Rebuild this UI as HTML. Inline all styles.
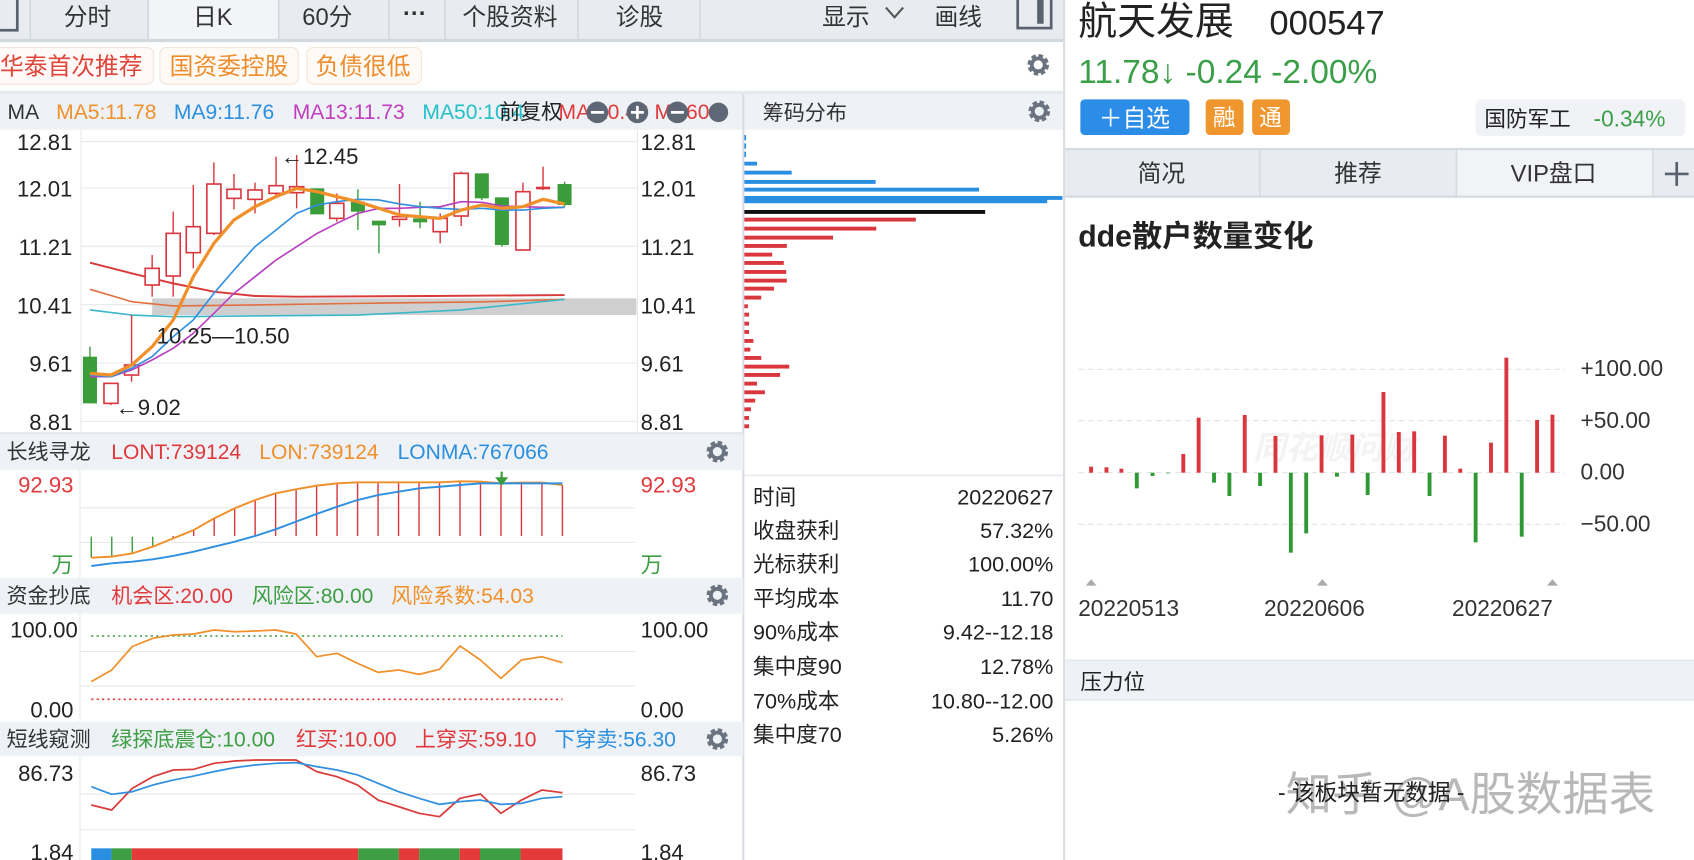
<!DOCTYPE html>
<html><head><meta charset="utf-8">
<style>
html,body{margin:0;padding:0;background:#fff;overflow:hidden}
svg{display:block}
text{font-family:"Liberation Sans","Noto Sans CJK SC",sans-serif}
</style></head>
<body>
<svg id="s" width="1694" height="860" viewBox="0 0 1568 796" preserveAspectRatio="none" xmlns="http://www.w3.org/2000/svg">
<defs>
<g id="gear"><circle r="7.5" fill="none" stroke="#6b7380" stroke-width="5" stroke-dasharray="3.6 2.3"/><circle r="6" fill="none" stroke="#6b7380" stroke-width="3.5"/></g>
</defs>
<rect width="1568" height="796" fill="#fff"/>
<rect x="0" y="0" width="985" height="37" fill="#e8ecf1"/>
<rect x="137" y="0" width="121" height="37" fill="#f2f4f7"/>
<rect x="0" y="36" width="985" height="3" fill="#d3d8df"/>
<g stroke="#d3d8df" stroke-width="1.5">
<line x1="28" y1="0" x2="28" y2="36"/><line x1="137" y1="0" x2="137" y2="36"/><line x1="258" y1="0" x2="258" y2="36"/><line x1="360" y1="0" x2="360" y2="36"/><line x1="412" y1="0" x2="412" y2="36"/><line x1="535" y1="0" x2="535" y2="36"/><line x1="648" y1="0" x2="648" y2="36"/></g>
<rect x="-6" y="-4" width="22" height="32" fill="none" stroke="#5a6270" stroke-width="2.5"/>
<g font-size="22" fill="#333" text-anchor="middle">
<text x="81" y="23">分时</text><text x="197" y="23">日K</text><text x="303" y="23">60分</text><text x="384" y="20" font-weight="bold">···</text><text x="472" y="23">个股资料</text><text x="592" y="23">诊股</text>
<text x="783" y="23">显示</text><text x="887" y="23">画线</text></g>
<path d="M820 7 L828 16 L836 7" fill="none" stroke="#555" stroke-width="2"/>
<rect x="942" y="-4" width="31" height="30" fill="none" stroke="#5a6270" stroke-width="2.5"/>
<rect x="960" y="-2" width="6" height="24" fill="#5a6270"/>
<rect x="-6" y="44" width="148" height="34" rx="6" fill="#fffaf8" stroke="#f3e1da"/>
<rect x="148" y="44" width="128" height="34" rx="6" fill="#fffaf6" stroke="#f3e4d6"/>
<rect x="284" y="44" width="106" height="34" rx="6" fill="#fffaf6" stroke="#f3e4d6"/>
<text x="0" y="69" font-size="22" fill="#e0453c">华泰首次推荐</text>
<text x="157" y="69" font-size="22" fill="#ee8c2c">国资委控股</text>
<text x="292" y="69" font-size="22" fill="#ee8c2c">负债很低</text>
<use href="#gear" x="961" y="60"/>
<rect x="0" y="84" width="985" height="3" fill="#e6eaef"/>
<rect x="0" y="87" width="688" height="33" fill="#eef1f5"/>
<rect x="688" y="87" width="297" height="33" fill="#eef1f5"/>
<line x1="688" y1="87" x2="688" y2="796" stroke="#d8dde3" stroke-width="2"/>
<g font-size="19.5">
<text x="7" y="110" fill="#333">MA</text>
<text x="52" y="110" fill="#f0902a">MA5:11.78</text>
<text x="161" y="110" fill="#2a8fe0">MA9:11.76</text>
<text x="271" y="110" fill="#c23cc0">MA13:11.73</text>
<text x="391" y="110" fill="#22c0c8">MA50:10.4</text>
<text x="517" y="110" fill="#e03a3a">MA:10.48 MA60</text>
<text x="462" y="110" fill="#222">前复权</text>
</g>
<g fill="#5e6775"><circle cx="553" cy="104" r="10"/><circle cx="590" cy="104" r="10"/><circle cx="627" cy="104" r="10"/><circle cx="665" cy="104" r="9"/></g>
<g stroke="#fff" stroke-width="2.5"><line x1="547" y1="104" x2="559" y2="104"/><line x1="584" y1="104" x2="596" y2="104"/><line x1="590" y1="98" x2="590" y2="110"/><line x1="621" y1="104" x2="633" y2="104"/></g>
<text x="706" y="111" font-size="19.5" fill="#333">筹码分布</text>
<use href="#gear" x="962" y="103"/>
<g stroke="#e6e8eb" stroke-width="1">
<line x1="75" y1="131" x2="590" y2="131"/><line x1="75" y1="174" x2="590" y2="174"/><line x1="75" y1="228" x2="590" y2="228"/><line x1="75" y1="282" x2="590" y2="282"/><line x1="75" y1="336" x2="590" y2="336"/><line x1="75" y1="390" x2="590" y2="390"/>
<line x1="75" y1="120" x2="75" y2="400"/><line x1="590" y1="120" x2="590" y2="400"/></g>
<g font-size="20.5" fill="#222">
<g text-anchor="end"><text x="67" y="139">12.81</text><text x="67" y="182">12.01</text><text x="67" y="236">11.21</text><text x="67" y="290">10.41</text><text x="67" y="344">9.61</text><text x="67" y="398">8.81</text></g>
<text x="593" y="139">12.81</text><text x="593" y="182">12.01</text><text x="593" y="236">11.21</text><text x="593" y="290">10.41</text><text x="593" y="344">9.61</text><text x="593" y="398">8.81</text>
</g>
<g id="main"></g>
<g font-size="20.5" fill="#222"><text x="260" y="152">←12.45</text><text x="145" y="318">10.25—10.50</text><text x="107" y="384">←9.02</text></g>
<g id="chip"></g>
<rect x="0" y="400" width="688" height="2" fill="#e2e6eb"/>
<rect x="0" y="402" width="688" height="33" fill="#eef1f5"/>
<rect x="0" y="535" width="688" height="33" fill="#eef1f5"/>
<rect x="0" y="668" width="688" height="32" fill="#eef1f5"/>
<g font-size="19.5">
<text x="6" y="425" fill="#333">长线寻龙</text><text x="103" y="425" fill="#e0393c">LONT:739124</text><text x="240" y="425" fill="#f0902a">LON:739124</text><text x="368" y="425" fill="#2a8fe0">LONMA:767066</text>
<text x="6" y="558" fill="#333">资金抄底</text><text x="103" y="558" fill="#e0393c">机会区:20.00</text><text x="233" y="558" fill="#3d9e44">风险区:80.00</text><text x="362" y="558" fill="#f0902a">风险系数:54.03</text>
<text x="6" y="691" fill="#333">短线窥测</text><text x="103" y="691" fill="#3d9e44">绿探底震仓:10.00</text><text x="274" y="691" fill="#e0393c">红买:10.00</text><text x="384" y="691" fill="#e0393c">上穿买:59.10</text><text x="513" y="691" fill="#2a8fe0">下穿卖:56.30</text>
</g>
<use href="#gear" x="664" y="418"/><use href="#gear" x="664" y="551"/><use href="#gear" x="664" y="684"/>
<g stroke="#e6e8eb"><line x1="74" y1="435" x2="74" y2="535"/><line x1="74" y1="568" x2="74" y2="668"/><line x1="74" y1="700" x2="74" y2="796"/>
<line x1="74" y1="470" x2="588" y2="470"/><line x1="74" y1="502" x2="588" y2="502"/><line x1="74" y1="603" x2="588" y2="603"/><line x1="74" y1="635" x2="588" y2="635"/><line x1="74" y1="735" x2="588" y2="735"/><line x1="74" y1="768" x2="588" y2="768"/></g>
<g font-size="20.5">
<text x="68" y="456" fill="#e0393c" text-anchor="end">92.93</text><text x="593" y="456" fill="#e0393c">92.93</text>
<text x="68" y="530" fill="#3d9e44" text-anchor="end">万</text><text x="593" y="530" fill="#3d9e44">万</text>
<text x="72" y="590" fill="#222" text-anchor="end">100.00</text><text x="593" y="590" fill="#222">100.00</text>
<text x="68" y="664" fill="#222" text-anchor="end">0.00</text><text x="593" y="664" fill="#222">0.00</text>
<text x="68" y="723" fill="#222" text-anchor="end">86.73</text><text x="593" y="723" fill="#222">86.73</text>
<text x="68" y="796" fill="#222" text-anchor="end">1.84</text><text x="593" y="796" fill="#222">1.84</text>
</g>
<g id="ind"></g>
<line x1="688" y1="440" x2="985" y2="440" stroke="#e6e8eb" stroke-width="1.5"/>
<g font-size="20" fill="#222">
<text x="697" y="467">时间</text><text x="697" y="498">收盘获利</text><text x="697" y="529">光标获利</text><text x="697" y="561">平均成本</text><text x="697" y="592">90%成本</text><text x="697" y="624">集中度90</text><text x="697" y="656">70%成本</text><text x="697" y="687">集中度70</text>
<g text-anchor="end"><text x="975" y="467">20220627</text><text x="975" y="498">57.32%</text><text x="975" y="529">100.00%</text><text x="975" y="561">11.70</text><text x="975" y="592">9.42--12.18</text><text x="975" y="624">12.78%</text><text x="975" y="656">10.80--12.00</text><text x="975" y="687">5.26%</text></g>
</g>
<line x1="985" y1="0" x2="985" y2="796" stroke="#d8dde3" stroke-width="2"/>
<text x="998" y="32" font-size="36" fill="#222">航天发展</text>
<text x="1175" y="32" font-size="32" fill="#222">000547</text>
<text x="998" y="77" font-size="31" fill="#3a9f48">11.78↓ -0.24 -2.00%</text>
<rect x="1000" y="92" width="101" height="33" rx="4" fill="#2b8de8"/>
<text x="1050" y="117" font-size="22" fill="#fff" text-anchor="middle">＋自选</text>
<rect x="1116" y="92" width="35" height="33" rx="4" fill="#f0962e"/><text x="1133" y="116" font-size="21" fill="#fff" text-anchor="middle">融</text>
<rect x="1159" y="92" width="35" height="33" rx="4" fill="#f0962e"/><text x="1176" y="116" font-size="21" fill="#fff" text-anchor="middle">通</text>
<rect x="1366" y="92" width="194" height="34" rx="5" fill="#f0f2f5"/>
<text x="1374" y="117" font-size="20" fill="#222">国防军工</text><text x="1475" y="117" font-size="21" fill="#3a9f48">-0.34%</text>
<rect x="986" y="137" width="582" height="46" fill="#e8ecf1"/>
<rect x="1348" y="139" width="182" height="42" fill="#f1f3f6"/>
<rect x="986" y="137" width="582" height="2" fill="#d5dae0"/><rect x="986" y="181" width="582" height="2" fill="#d5dae0"/>
<g stroke="#d5dae0" stroke-width="1.5"><line x1="1166" y1="139" x2="1166" y2="181"/><line x1="1348" y1="139" x2="1348" y2="181"/><line x1="1530" y1="139" x2="1530" y2="181"/></g>
<g font-size="22" fill="#333" text-anchor="middle"><text x="1075" y="168">简况</text><text x="1257" y="168">推荐</text><text x="1438" y="168">VIP盘口</text></g>
<path d="M1552 150 V172 M1541 161 H1563" stroke="#5a6270" stroke-width="2.5"/>
<text x="998" y="228" font-size="28" font-weight="bold" fill="#222">dde散户数量变化</text>
<text x="1160" y="425" font-size="30" font-weight="bold" font-style="italic" fill="#f3f3f3">同花顺问财</text>
<g id="dde"></g>
<g font-size="21" fill="#333"><text x="1463" y="348">+100.00</text><text x="1463" y="396">+50.00</text><text x="1463" y="444">0.00</text><text x="1463" y="492">−50.00</text>
<text x="998" y="570">20220513</text><text x="1170" y="570">20220606</text><text x="1344" y="570">20220627</text></g>
<g fill="#aaa"><path d="M1005 542 l5 -6 l5 6z"/><path d="M1219 542 l5 -6 l5 6z"/><path d="M1432 542 l5 -6 l5 6z"/></g>
<rect x="986" y="611" width="582" height="37" fill="#eef2f6"/>
<line x1="986" y1="611" x2="1568" y2="611" stroke="#dfe3e8"/><line x1="986" y1="648" x2="1568" y2="648" stroke="#dfe3e8"/>
<text x="1000" y="638" font-size="20" fill="#222">压力位</text>
<text x="1190" y="750" font-size="43" fill="#b8b8b8">知乎 @A股数据表</text>
<text x="1183" y="741" font-size="21" fill="#222">- 该板块暂无数据 -</text>
</svg>
<script>
var NS="http://www.w3.org/2000/svg";
function el(p,t,a){var e=document.createElementNS(NS,t);for(var k in a)e.setAttribute(k,a[k]);document.getElementById(p).appendChild(e);return e;}
function mx(x){return x/2.258;} function my(y){return y/3.241;}
var R="#d9363e",G="#3a9d3a";
el("main","rect",{x:mx(318),y:my(895),width:mx(1330)-mx(318),height:my(945)-my(895),fill:"#cfcfcf"});
function line(p,pts,fx,fy,c,w,extra){var d=pts.map(function(q){return fx(q[0]).toFixed(1)+","+fy(q[1]).toFixed(1)}).join(" ");var a={points:d,fill:"none",stroke:c,"stroke-width":w,"stroke-linejoin":"round"};for(var k in extra)a[k]=extra[k];el(p,"polyline",a);}
line("main",[[188,788],[275,820],[362,850],[447,875],[533,888],[620,890],[900,888],[1180,885]],mx,my,"#d93a3a",1.8);
line("main",[[188,868],[275,905],[362,918],[533,915],[748,910],[1000,906],[1180,898]],mx,my,"#e07040",1.5);
line("main",[[188,930],[275,945],[362,950],[748,945],[964,930],[1180,898]],mx,my,"#3ab8c8",1.5);
var C=[[188,1070,1210,1040,1210,0],[232,1150,1210,1150,1215,1],[275,1095,1125,945,1145,1],[318,805,855,765,890,1],[362,700,828,635,890,1],[404,680,758,555,805,1],[447,552,700,487,705,1],[489,568,595,522,628,1],[533,570,598,548,640,1],[577,557,580,470,590,1],[620,560,578,465,625,1],[663,565,643,565,643,0],[704,610,655,580,665,1],[748,605,635,568,690,0],[792,662,676,662,760,0],[835,650,658,552,680,1],[878,655,667,605,685,0],[920,655,695,640,730,1],[964,520,648,515,678,1],[1007,520,595,520,600,0],[1049,592,735,592,740,0],[1093,575,750,548,750,1],[1135,560,568,500,570,2],[1180,552,615,545,620,0]];
C.forEach(function(c){var x=mx(c[0]),col=c[5]?R:G;
el("main","line",{x1:x,y1:my(c[3]),x2:x,y2:my(c[4]),stroke:col,"stroke-width":1.3});
var w=13;var a={x:x-w/2,y:my(c[1]),width:w,height:Math.max(2,my(c[2])-my(c[1]))};
if(c[5]==1){a.fill="#fff";a.stroke=col;a["stroke-width"]=1.5;}else a.fill=col;el("main","rect",a);});
line("main",[[188,1130],[232,1130],[275,1110],[318,1080],[362,1045],[404,1000],[447,940],[489,880],[533,830],[577,780],[620,740],[663,700],[704,670],[748,640],[792,625],[835,625],[878,622],[920,620],[964,605],[1007,607],[1049,618],[1093,620],[1135,622],[1180,622]],mx,my,"#b840c0",1.5);
line("main",[[188,1125],[232,1130],[275,1105],[318,1070],[362,1010],[404,960],[447,880],[489,810],[533,740],[577,690],[620,640],[663,615],[704,605],[748,598],[792,600],[835,612],[878,620],[920,625],[964,628],[1007,625],[1049,630],[1093,630],[1135,625],[1180,622]],mx,my,"#3090e0",1.5);
line("main",[[188,1120],[232,1125],[275,1095],[318,1040],[362,960],[404,830],[447,730],[489,660],[533,620],[577,590],[620,565],[663,575],[704,590],[748,605],[792,625],[835,645],[878,650],[920,655],[964,630],[1007,615],[1049,625],[1093,620],[1135,598],[1180,612]],mx,my,"#f0902a",3);
function cx(x){return (740+x/1.6436)/1.0804;} function cy(y){return y/3/1.0804;}
var B="#2a8fe0",RR="#d9363e";
var chips=[[405,10,B],[430,10,B],[455,10,B],[485,28,B],[512,85,B],[540,223,B],[563,393,B],[588,530,B],[598,505,B],[630,403,"#111"],[653,289,RR],[680,224,RR],[707,153,RR],[732,77,RR],[758,53,RR],[783,72,RR],[810,76,RR],[836,77,RR],[860,56,RR],[887,35,RR],[913,13,RR],[938,15,RR],[965,15,RR],[990,15,RR],[1017,22,RR],[1043,17,RR],[1068,35,RR],[1094,81,RR],[1119,66,RR],[1145,28,RR],[1171,41,RR],[1196,25,RR],[1222,18,RR],[1248,15,RR],[1273,15,RR]];
chips.forEach(function(c){el("chip","rect",{x:689,y:cy(c[0]),width:Math.max(1.5,cx(c[1])-689),height:c[1]<=10?5:3.6,fill:c[2]});});
function ix(x){return x/1.598;} function iy(y){return (430+y/3)/1.0804;}
var xs=[];for(var i=0;i<24;i++)xs.push(135+i*30.3);
var oL=[383,380,370,350,325,300,265,235,210,190,178,167,160,157,157,157,157,157,154,155,160,158,158,165];
var bL=[408,400,395,388,378,365,350,335,318,298,275,252,230,210,195,185,175,170,165,160,160,160,160,160];
for(var i=0;i<24;i++){var x=ix(xs[i]);if(i<4)el("ind","line",{x1:x,y1:iy(320),x2:x,y2:iy(oL[i]),stroke:G,"stroke-width":1.3});else el("ind","line",{x1:x,y1:iy(oL[i]),x2:x,y2:iy(318),stroke:R,"stroke-width":1.3});}
line("ind",xs.map(function(x,i){return [x,oL[i]]}),ix,iy,"#f0902a",1.8);
line("ind",xs.map(function(x,i){return [x,bL[i]]}),ix,iy,"#3090e0",1.8);
el("ind","path",{d:"M"+ix(742)+" "+iy(125)+" v8 M"+(ix(742)-4)+" "+iy(145)+" l4 5 l4 -5z",stroke:G,fill:G,"stroke-width":2});
el("ind","line",{x1:ix(135),y1:iy(618),x2:ix(832),y2:iy(618),stroke:"#3d9e44","stroke-width":1.5,"stroke-dasharray":"2 3"});
el("ind","line",{x1:ix(135),y1:iy(808),x2:ix(832),y2:iy(808),stroke:"#e0393c","stroke-width":1.5,"stroke-dasharray":"2 3"});
var z=[755,720,650,625,615,612,600,605,603,600,612,680,670,700,727,720,733,718,648,690,745,690,680,698];
line("ind",xs.map(function(x,i){return [x,z[i]]}),ix,iy,"#f0902a",1.6);
var r2=[1125,1140,1075,1040,1020,1018,1000,993,990,990,990,1025,1040,1065,1110,1130,1150,1160,1105,1092,1150,1110,1080,1088];
var b2=[1070,1093,1085,1065,1050,1038,1025,1013,1005,1000,998,1010,1020,1035,1060,1085,1105,1123,1115,1110,1123,1120,1105,1100];
line("ind",xs.map(function(x,i){return [x,r2[i]]}),ix,iy,"#d93a3a",1.6);
line("ind",xs.map(function(x,i){return [x,b2[i]]}),ix,iy,"#3090e0",1.6);
[[135,165,"#2a8fe0"],[165,195,"#3d9e44"],[195,530,"#e53a3a"],[530,590,"#3d9e44"],[590,620,"#e53a3a"],[620,680,"#3d9e44"],[680,710,"#e53a3a"],[710,770,"#3d9e44"],[770,832,"#e53a3a"]].forEach(function(s){el("ind","rect",{x:ix(s[0]),y:iy(1255),width:ix(s[1])-ix(s[0]),height:20,fill:s[2]});});
function dx(x){return (1060+x/2.473)/1.0804;} function dy(y){return (340+y/3)/1.0804;}
[88,242,398,553].forEach(function(y){el("dde","line",{x1:dx(45),y1:dy(y),x2:dx(1250),y2:dy(y),stroke:"#e2e2e2","stroke-dasharray":"5 4"});});
var up=[[77,380],[115,382],[152,386],[305,342],[343,233],[457,225],[533,288],[647,286],[723,284],[800,156],[838,276],[876,274],[952,287],[990,386],[1066,308],[1104,53],[1180,240],[1218,224]];
var dn=[[190,445],[229,408],[267,400],[381,428],[419,468],[495,438],[571,638],[609,580],[685,410],[761,465],[914,468],[1028,607],[1142,590]];
up.forEach(function(b){el("dde","rect",{x:dx(b[0])-1.8,y:dy(b[1]),width:3.6,height:dy(398)-dy(b[1]),fill:"#d9363e"});});
dn.forEach(function(b){el("dde","rect",{x:dx(b[0])-1.8,y:dy(398),width:3.6,height:dy(b[1])-dy(398),fill:"#2f9a35"});});
</script>
</body></html>
